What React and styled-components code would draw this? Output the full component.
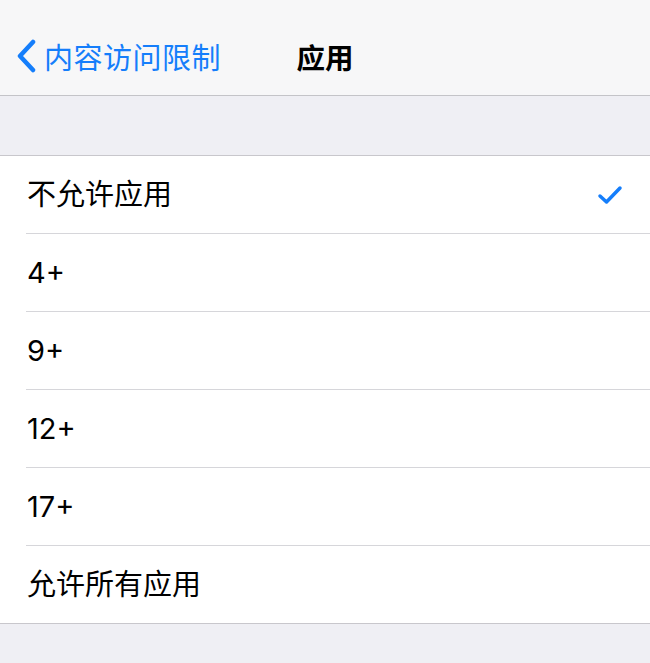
import React from "react";
import styled, { createGlobalStyle } from "styled-components";

const GlobalStyle = createGlobalStyle`
  html, body {
    margin: 0;
    padding: 0;
    background: #efeff4;
    font-family: Inter, "Noto Sans CJK SC", sans-serif;
  }
`;

const Page = styled.div`
  width: 650px;
  height: 663px;
  background: #efeff4;
  overflow: hidden;
`;

const NavBar = styled.div`
  position: relative;
  height: 96px;
  box-sizing: border-box;
  padding-top: 17px;
  background: #f7f7f8;
  border-bottom: 1px solid #c4c4c8;
  display: flex;
  align-items: center;
`;

const BackButton = styled.div`
  display: flex;
  align-items: center;
  gap: 7px;
  padding-left: 15px;
  color: #157efb;
  font-size: 29px;
  letter-spacing: 0.5px;
`;

const Title = styled.div`
  position: absolute;
  left: 0;
  right: 0;
  top: 17px;
  bottom: 0;
  display: flex;
  align-items: center;
  justify-content: center;
  font-size: 28.5px;
  font-weight: 700;
  color: #000;
  pointer-events: none;
`;

const Spacer = styled.div`
  height: 59px;
`;

const List = styled.div`
  background: #fff;
  border-top: 1px solid #c8c7cc;
  border-bottom: 1px solid #c8c7cc;
`;

const Row = styled.div`
  position: relative;
  height: 77px;
  display: flex;
  align-items: center;
  justify-content: space-between;
  padding: 0 27px 0 27px;
  font-size: 29px;
  color: #000;
  border-bottom: ${(p) => (p.$last ? "none" : "1px solid transparent")};

  &::after {
    content: "";
    display: ${(p) => (p.$last ? "none" : "block")};
    position: absolute;
    left: 26px;
    right: 0;
    bottom: -1px;
    height: 1px;
    background: #d6d6da;
  }
`;

const Label = styled.span`
  line-height: 1;
`;

const Chevron = () => (
  <svg width="22" height="34" viewBox="0 0 22 34">
    <path
      d="M18 3 L5 17 L18 31"
      fill="none"
      stroke="#157efb"
      strokeWidth="4.5"
      strokeLinecap="round"
      strokeLinejoin="round"
    />
  </svg>
);

const Check = () => (
  <svg width="26" height="22" viewBox="0 0 26 22">
    <path
      d="M3 12 L9.5 18 L23 4"
      fill="none"
      stroke="#157efb"
      strokeWidth="3.5"
      strokeLinecap="round"
      strokeLinejoin="round"
    />
  </svg>
);

const items = [
  { label: "不允许应用", checked: true },
  { label: "4+" },
  { label: "9+" },
  { label: "12+" },
  { label: "17+" },
  { label: "允许所有应用" },
];

const App = () => {
  return (
    <>
      <GlobalStyle />
      <Page>
        <NavBar>
          <BackButton>
            <Chevron />
            <span>内容访问限制</span>
          </BackButton>
          <Title>应用</Title>
        </NavBar>
        <Spacer />
        <List>
          {items.map((item, i) => (
            <Row key={i} $last={i === items.length - 1}>
              <Label>{item.label}</Label>
              {item.checked && <Check />}
            </Row>
          ))}
        </List>
      </Page>
    </>
  );
};

export default App;
